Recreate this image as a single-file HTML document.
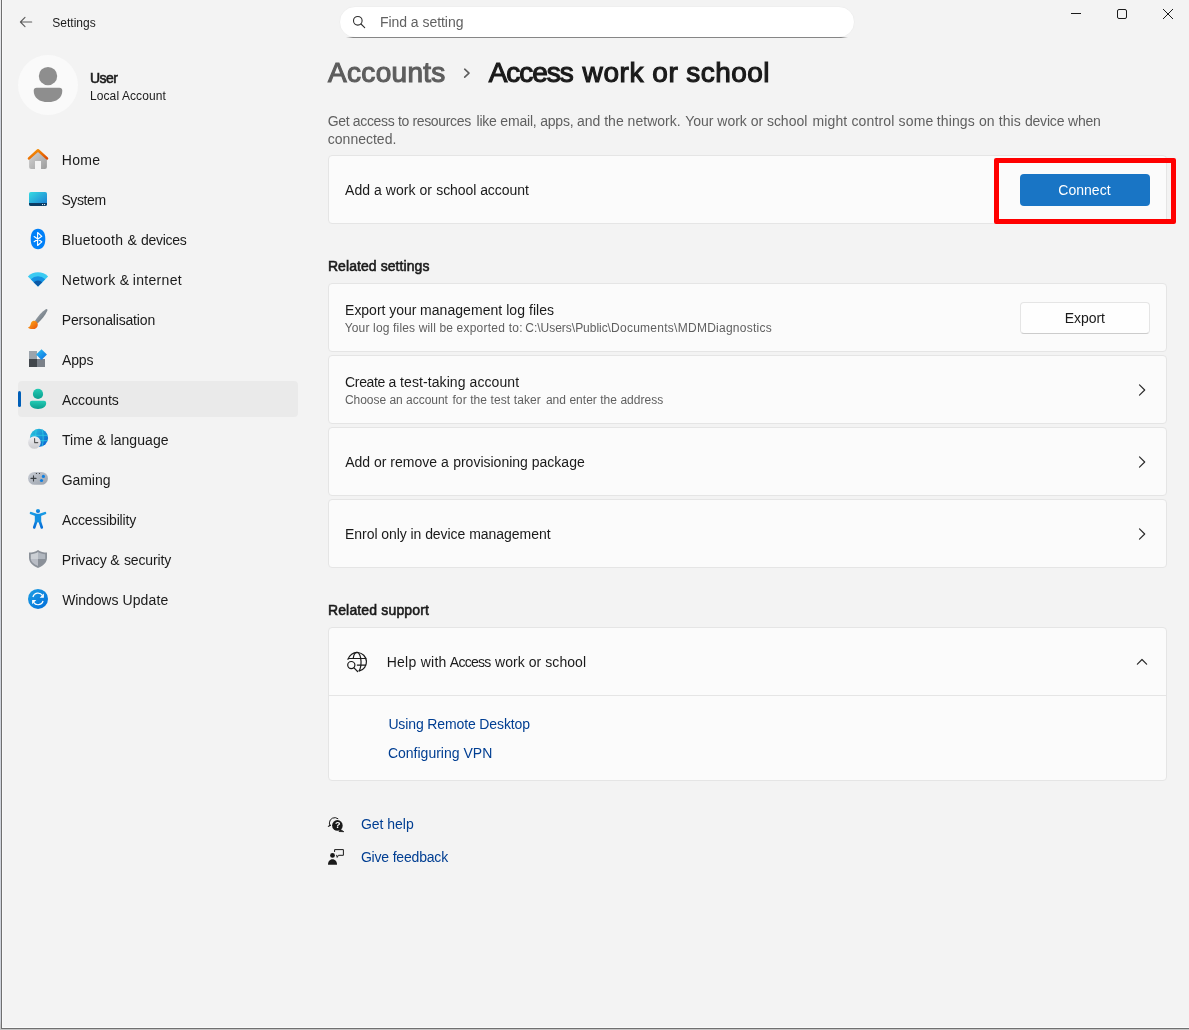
<!DOCTYPE html>
<html lang="en"><head><meta charset="utf-8"><title>Settings</title>
<style>
html,body{margin:0;padding:0;}
body{width:1189px;height:1030px;overflow:hidden;background:#f3f3f3;font-family:"Liberation Sans",sans-serif;}
#win{position:relative;width:1189px;height:1030px;overflow:hidden;background:#f3f3f3;}
.t{position:absolute;white-space:nowrap;line-height:1;}
.abs{position:absolute;}
.card{position:absolute;left:328px;width:839px;box-sizing:border-box;background:#fbfbfb;border:1px solid #e5e5e5;border-radius:4px;}
svg{position:absolute;overflow:visible;}
#txt{position:absolute;left:0;top:0;width:1189px;height:1030px;will-change:transform;}

</style></head><body>
<div id="win">
<!-- window frame edges -->
<div class="abs" style="left:0;top:0;width:1px;height:1030px;background:linear-gradient(to bottom,#ededee 0,#e4e5e9 40px,#cfd3dc 120px,#cdd1da 1020px,#c4c4c4 1026px)"></div>
<div class="abs" style="left:1px;top:0;width:1px;height:1029px;background:#6f6f6f"></div>
<div class="abs" style="left:2px;top:0;width:1px;height:1028px;background:#f9f9f9"></div>
<div class="abs" style="left:2px;top:1027px;width:1187px;height:1px;background:#fafafa"></div>
<div class="abs" style="left:1px;top:1028px;width:1188px;height:1px;background:#707070"></div>
<div class="abs" style="left:0;top:1029px;width:1189px;height:1px;background:#c4c4c4"></div>

<!-- search box -->
<div class="abs" style="left:339px;top:6px;width:516px;height:32px;box-sizing:border-box;background:#fff;border:1px solid #efefef;border-radius:16px"></div>
<div class="abs" style="left:346px;top:37px;width:502px;height:1px;background:linear-gradient(to right,rgba(134,134,134,0),#868686 7px,#868686 495px,rgba(134,134,134,0))"></div>

<!-- avatar -->
<div class="abs" style="left:18px;top:55px;width:60px;height:60px;border-radius:50%;background:#fafafa"></div>

<!-- selected nav -->
<div class="abs" style="left:18px;top:381px;width:280px;height:36px;border-radius:4px;background:#eaeaea"></div>
<div class="abs" style="left:18px;top:391px;width:3px;height:16px;border-radius:1.5px;background:#005fb8"></div>

<!-- cards -->
<div class="card" style="top:155px;height:69px"></div>
<div class="card" style="top:283px;height:69px"></div>
<div class="card" style="top:355px;height:69px"></div>
<div class="card" style="top:427px;height:69px"></div>
<div class="card" style="top:499px;height:69px"></div>
<div class="card" style="top:627px;height:154px"></div>
<div class="abs" style="left:329px;top:695px;width:837px;height:1px;background:#e5e5e5"></div>

<!-- buttons -->
<div class="abs" style="left:1020px;top:174px;width:130px;height:32px;border-radius:4px;background:#1975c5"></div>
<div class="abs" style="left:1020px;top:302px;width:130px;height:32px;box-sizing:border-box;border-radius:4px;background:#fefefe;border:1px solid #e5e5e5;border-bottom-color:#cccccc"></div>

<!-- red highlight -->
<div class="abs" style="left:994px;top:158px;width:182px;height:66px;box-sizing:border-box;border:5px solid #ff0000;border-radius:2px"></div>
<svg width="1189" height="1030" viewBox="0 0 1189 1030" style="left:0;top:0">
<defs>
<linearGradient id="gRoof" x1="0" y1="0" x2="1" y2="1"><stop offset="0" stop-color="#f59a0a"/><stop offset="0.5" stop-color="#ec7404"/><stop offset="1" stop-color="#dc4a00"/></linearGradient>
<linearGradient id="gHouse" x1="0" y1="0" x2="1" y2="1"><stop offset="0" stop-color="#d6d6d6"/><stop offset="1" stop-color="#9c9c9c"/></linearGradient>
<linearGradient id="gSys" x1="0" y1="0" x2="1" y2="1"><stop offset="0" stop-color="#35dbe2"/><stop offset="1" stop-color="#1a78d2"/></linearGradient>
<linearGradient id="gHandle" x1="0" y1="0" x2="1" y2="1"><stop offset="0" stop-color="#aab2ba"/><stop offset="1" stop-color="#5c666e"/></linearGradient>
<linearGradient id="gPaint" x1="0" y1="0" x2="1" y2="1"><stop offset="0" stop-color="#ffb21a"/><stop offset="1" stop-color="#e8500a"/></linearGradient>
<linearGradient id="gDiamond" x1="0" y1="0" x2="1" y2="1"><stop offset="0" stop-color="#2cc4f2"/><stop offset="1" stop-color="#0a6ae0"/></linearGradient>
<linearGradient id="gTeal" x1="0" y1="0" x2="0" y2="1"><stop offset="0" stop-color="#24cbb4"/><stop offset="1" stop-color="#0a9e8e"/></linearGradient>
<linearGradient id="gGlobe" x1="0" y1="0" x2="1" y2="1"><stop offset="0" stop-color="#2ccbdc"/><stop offset="1" stop-color="#0858d0"/></linearGradient>
<linearGradient id="gClock" x1="0" y1="0" x2="0" y2="1"><stop offset="0" stop-color="#f0f0f3"/><stop offset="1" stop-color="#cacace"/></linearGradient>
<linearGradient id="gPad" x1="0" y1="0" x2="1" y2="1"><stop offset="0" stop-color="#c8ccd4"/><stop offset="1" stop-color="#9aa2ac"/></linearGradient>
<linearGradient id="gAcc" x1="0" y1="0" x2="0" y2="1"><stop offset="0" stop-color="#1a9be4"/><stop offset="1" stop-color="#0870d8"/></linearGradient>
<linearGradient id="gUpd" x1="0" y1="0" x2="1" y2="1"><stop offset="0" stop-color="#1fa0e4"/><stop offset="1" stop-color="#006cd8"/></linearGradient>
</defs>

<!-- back arrow -->
<path d="M31.700 22H20.400M25 17.400l-4.600 4.600 4.600 4.600" fill="none" stroke="#5c5c5c" stroke-width="1.1" stroke-linecap="round" stroke-linejoin="round"/>

<!-- window controls -->
<path d="M1071 13.5h10" stroke="#1a1a1a" stroke-width="1" fill="none"/>
<rect x="1117.5" y="9.5" width="9" height="9" rx="1.5" fill="none" stroke="#1a1a1a" stroke-width="1"/>
<path d="M1163 9l10 10M1173 9l-10 10" stroke="#1a1a1a" stroke-width="1" fill="none"/>

<!-- search icon -->
<circle cx="357.8" cy="20.8" r="4.3" fill="none" stroke="#2e2e2e" stroke-width="1.1"/>
<path d="M361 24l3.700 3.600" stroke="#2e2e2e" stroke-width="1.1" stroke-linecap="round"/>

<!-- avatar person -->
<circle cx="48" cy="76.1" r="9.2" fill="#8e8e8e"/>
<path d="M36.7 87.7h22.6a3 3 0 0 1 3 3c0 7-5.6 11.4-14.3 11.4s-14.3-4.4-14.3-11.4a3 3 0 0 1 3-3z" fill="#8e8e8e"/>

<!-- breadcrumb chevron -->
<path d="M464.700 69.200l4.300 4-4.300 4" fill="none" stroke="#5d5d5d" stroke-width="1.600" stroke-linecap="round" stroke-linejoin="round"/>

<!-- HOME -->
<path d="M29.1 158.5L38 150.5l8.9 8v8.4a2 2 0 0 1-2 2H41v-8h-6v8h-3.9a2 2 0 0 1-2-2z" fill="url(#gHouse)"/>
<path d="M29 158.4L38 150.3l9 8.1" fill="none" stroke="url(#gRoof)" stroke-width="2.6" stroke-linecap="round" stroke-linejoin="round"/>

<!-- SYSTEM -->
<rect x="29" y="192" width="18" height="14" rx="1.8" fill="url(#gSys)"/>
<path d="M29 203h18v1.2a1.8 1.8 0 0 1-1.8 1.8H30.8a1.8 1.8 0 0 1-1.8-1.8z" fill="#0b3b63"/>
<rect x="42" y="204" width="1.1" height="1.1" fill="#d8e4ee"/><rect x="44" y="204" width="1.1" height="1.1" fill="#d8e4ee"/>

<!-- BLUETOOTH -->
<path d="M38 228.8c4.6 0 7.3 3.6 7.3 10.2s-2.7 10.2-7.3 10.2-7.3-3.600-7.300-10.200 2.700-10.200 7.300-10.200z" fill="#0080f8"/>
<path d="M34.100 236.500l7.700 5.300-4.200 3.700v-13.000l4.200 3.800-7.700 5.400" fill="none" stroke="#fff" stroke-width="1.1" stroke-linejoin="round" stroke-linecap="round"/>

<!-- NETWORK (wifi) -->
<path d="M38 286.400L27.900 276.500a14.200 14.200 0 0 1 20.200 0z" fill="#3acaf2"/>
<path d="M38 286.400L30.800 279.300a10.200 10.200 0 0 1 14.400 0z" fill="#1591e1"/>
<path d="M38 286.400L33.700 282.200a6.100 6.100 0 0 1 8.600 0z" fill="#0c59a6"/>

<!-- PERSONALISATION -->
<path d="M45.800 309.200c1.300-.5 2 .4 1.500 1.600-2.200 4.800-5.600 9-9.800 12.600l-2.500-2.700c3-4.600 6.600-8.600 10.800-11.500z" fill="url(#gHandle)"/>
<path d="M33.500 320.700c2.300-.3 4.300 1.400 4.300 3.700 0 3-2.500 4.800-5.400 4.700-1.800 0-3.500-.5-4.400-1.500 1.400-.5 2.300-1.400 2.600-3 .3-2 1.200-3.600 2.900-3.900z" fill="url(#gPaint)"/>

<!-- APPS -->
<rect x="29" y="351" width="8" height="8" fill="#9ca4ac"/>
<rect x="29" y="359" width="8" height="8" fill="#41464b"/>
<rect x="37" y="359" width="8" height="8" fill="#7a8088"/>
<path d="M41.500 349.200l5.400 5.400-5.400 5.400-5.400-5.400z" fill="url(#gDiamond)"/>

<!-- ACCOUNTS -->
<circle cx="38" cy="393.900" r="5.100" fill="url(#gTeal)"/>
<path d="M32 400.800h12a2.200 2.200 0 0 1 2.200 2.200c0 3.800-3.200 5.900-8.200 5.900s-8.200-2.100-8.200-5.900a2.200 2.200 0 0 1 2.200-2.200z" fill="url(#gTeal)"/>

<!-- TIME & LANGUAGE -->
<circle cx="39" cy="437.900" r="9.100" fill="url(#gGlobe)"/>
<g fill="none" stroke="#2fd0e6" stroke-width="0.8" opacity="0.9">
<path d="M30.300 435.300h17.400M33 440.700h14.700"/>
<path d="M36.300 429.200c-1 5.500-1 12 0 17.400M42.200 429.400c1.300 5.500 1.300 11.500 0 17"/>
</g>
<circle cx="34.400" cy="442.500" r="6.300" fill="url(#gClock)"/>
<path d="M34.600 438.600v4h3.200" fill="none" stroke="#565656" stroke-width="1.100" stroke-linecap="round" stroke-linejoin="round"/>

<!-- GAMING -->
<rect x="28.100" y="472" width="19.800" height="12.800" rx="6.400" fill="url(#gPad)"/>
<path d="M31 478.400h5M33.500 475.900v5" stroke="#3c4044" stroke-width="1.100" stroke-linecap="round"/>
<circle cx="36.400" cy="473.500" r="0.600" fill="#2a2a2a"/><circle cx="39.500" cy="473.500" r="0.600" fill="#2a2a2a"/>
<circle cx="43.400" cy="476.400" r="1.600" fill="#0f7fe0"/><circle cx="41.500" cy="480.500" r="1.600" fill="#0f7fe0"/>

<!-- ACCESSIBILITY -->
<circle cx="38" cy="511" r="2.100" fill="url(#gAcc)"/>
<path d="M31 513.100l5.300 1.900h3.400l5.300-1.900M36.200 515v6.500l-2 6M39.800 515v6.500l2 6" fill="none" stroke="url(#gAcc)" stroke-width="2.600" stroke-linecap="round" stroke-linejoin="round"/>
<rect x="34.900" y="514" width="6.200" height="8.300" fill="#1391e2"/>

<!-- PRIVACY -->
<path d="M38 549.900c2.600 1.800 5.600 2.600 9 2.700v5c0 4.600-3 8-9 10.400-6-2.400-9-5.800-9-10.400v-5c3.400-.1 6.400-.9 9-2.700z" fill="#8b9199"/>
<path d="M38 551.900c-2.200 1.400-4.600 2.100-7.200 2.300v4.800H38z" fill="#ccd0d5"/>
<path d="M38 551.900c2.200 1.400 4.600 2.100 7.200 2.300v4.800H38z" fill="#b1b7bf"/>
<path d="M30.800 559H38v7c-4.600-2-7-4.200-7.200-7z" fill="#b9bdc5"/>
<path d="M45.200 559H38v7c4.600-2 7-4.200 7.200-7z" fill="#8a9098"/>

<!-- WINDOWS UPDATE -->
<circle cx="38" cy="598.900" r="10" fill="url(#gUpd)"/>
<path d="M32.900 597a5.300 5.300 0 0 1 9.500-1.600" fill="none" stroke="#fff" stroke-width="1.200"/>
<path d="M43.900 593.600v4.200h-4.200z" fill="#fff"/>
<path d="M43.100 600.800a5.300 5.300 0 0 1-9.500 1.600" fill="none" stroke="#fff" stroke-width="1.200"/>
<path d="M32.100 604.200v-4.200h4.200z" fill="#fff"/>

<!-- card chevrons -->
<g fill="none" stroke="#2b2b2b" stroke-width="1.200" stroke-linecap="round" stroke-linejoin="round">
<path d="M1139.500 384.800l5.200 5.200-5.200 5.200"/>
<path d="M1139.500 456.800l5.200 5.200-5.200 5.200"/>
<path d="M1139.500 528.800l5.200 5.200-5.200 5.200"/>
<path d="M1137.400 664.200l4.600-4.700 4.600 4.700"/>
</g>

<!-- help globe icon -->
<g fill="none" stroke="#1a1a1a" stroke-width="1.200" stroke-linecap="round" stroke-linejoin="round">
<path d="M347.970 659.420A9.400 9.400 0 1 1 359.400 670.950"/>
<path d="M348.300 658.500H365.800M357.300 665.100H365.800"/>
<path d="M353.300 657.900c.500-3.300 1.900-5.400 3.750-5.450 2.200 0 4 4.200 4 9.400 0 4.400-.700 7.400-2 9.100"/>
<circle cx="351.300" cy="665.100" r="3.600"/>
<path d="M354 667.800l3.600 3.700"/>
</g>

<!-- get help icon -->
<circle cx="337.400" cy="825.400" r="5.300" fill="#1a1a1a"/>
<path d="M340.500 829.500l3.300 2.200-4.800-.2z" fill="#1a1a1a" stroke="#1a1a1a" stroke-width="0.800" stroke-linejoin="round"/>
<path d="M337.900 818.600a5.400 5.400 0 0 0-8.500 4.300c0 1 .1 1.800.3 2.500" fill="none" stroke="#1a1a1a" stroke-width="1" stroke-linecap="round"/>
<path d="M328.300 826.500l2.500-1.300-1.300 0z" fill="#1a1a1a" stroke="#1a1a1a" stroke-width="1" stroke-linejoin="round"/>

<!-- feedback icon -->
<circle cx="332.500" cy="855.400" r="2.400" fill="#1a1a1a"/>
<path d="M328 864.700c0-3.200 1.800-5.500 4.500-5.500s4.500 2.300 4.500 5.500z" fill="#1a1a1a"/>
<path d="M334.600 851.600v-2h8.800v5.700h-5l-1.200 2.100-.5-2.100" fill="none" stroke="#1a1a1a" stroke-width="1" stroke-linejoin="round" stroke-linecap="round"/>
</svg>

<div id="txt">
<span class="t" style="left:52.18px;top:17.24px;font-size:12px;color:#1b1b1b;letter-spacing:0.030px">Settings</span>
<span class="t" style="left:379.97px;top:15.15px;font-size:14px;color:#616161;letter-spacing:-0.044px">Find a setting</span>
<span class="t" style="left:90.00px;top:71.15px;font-size:14px;color:#1a1a1a;letter-spacing:-0.558px;-webkit-text-stroke:0.56px #1a1a1a">User</span>
<span class="t" style="left:90.00px;top:90.14px;font-size:12px;color:#1a1a1a;letter-spacing:0.092px">Local Account</span>
<span class="t" style="left:61.76px;top:152.95px;font-size:14px;color:#1a1a1a;letter-spacing:0.335px">Home</span>
<span class="t" style="left:61.42px;top:192.95px;font-size:14px;color:#1a1a1a;letter-spacing:-0.382px">System</span>
<span class="t" style="left:61.76px;top:232.95px;font-size:14px;color:#1a1a1a;letter-spacing:0.261px">Bluetooth &amp; </span>
<span class="t" style="left:141.06px;top:232.95px;font-size:14px;color:#1a1a1a;letter-spacing:-0.288px">devices</span>
<span class="t" style="left:61.76px;top:272.95px;font-size:14px;color:#1a1a1a;letter-spacing:0.350px">Network &amp; </span>
<span class="t" style="left:132.69px;top:272.95px;font-size:14px;color:#1a1a1a;letter-spacing:0.338px">internet</span>
<span class="t" style="left:61.76px;top:312.95px;font-size:14px;color:#1a1a1a;letter-spacing:-0.163px">Personalisation</span>
<span class="t" style="left:62.06px;top:352.95px;font-size:14px;color:#1a1a1a;letter-spacing:-0.155px">Apps</span>
<span class="t" style="left:62.06px;top:392.95px;font-size:14px;color:#1a1a1a;letter-spacing:-0.138px">Accounts</span>
<span class="t" style="left:61.97px;top:432.95px;font-size:14px;color:#1a1a1a;letter-spacing:0.099px">Time &amp; </span>
<span class="t" style="left:110.44px;top:432.95px;font-size:14px;color:#1a1a1a;letter-spacing:0.078px">language</span>
<span class="t" style="left:61.68px;top:472.95px;font-size:14px;color:#1a1a1a;letter-spacing:-0.053px">Gaming</span>
<span class="t" style="left:62.06px;top:512.95px;font-size:14px;color:#1a1a1a;letter-spacing:-0.175px">Accessibility</span>
<span class="t" style="left:61.76px;top:552.95px;font-size:14px;color:#1a1a1a;letter-spacing:-0.163px">Privacy &amp; </span>
<span class="t" style="left:123.92px;top:552.95px;font-size:14px;color:#1a1a1a;letter-spacing:-0.138px">security</span>
<span class="t" style="left:62.17px;top:592.95px;font-size:14px;color:#1a1a1a;letter-spacing:-0.095px">Windows </span>
<span class="t" style="left:122.46px;top:592.95px;font-size:14px;color:#1a1a1a;letter-spacing:0.134px">Update</span>
<span class="t" style="left:328.04px;top:59.30px;font-size:28px;color:#5d5d5d;letter-spacing:0.308px;-webkit-text-stroke:1.12px #5d5d5d">Accounts</span>
<span class="t" style="left:488.72px;top:59.30px;font-size:28px;color:#1a1a1a;letter-spacing:-1.065px;-webkit-text-stroke:1.12px #1a1a1a">Access </span>
<span class="t" style="left:582.62px;top:59.30px;font-size:28px;color:#1a1a1a;letter-spacing:0.554px;-webkit-text-stroke:1.12px #1a1a1a">work or </span>
<span class="t" style="left:686.36px;top:59.30px;font-size:28px;color:#1a1a1a;letter-spacing:0.428px;-webkit-text-stroke:1.12px #1a1a1a">school</span>
<span class="t" style="left:327.68px;top:113.75px;font-size:14px;color:#5f5f5f;letter-spacing:-0.337px">Get access to resources </span>
<span class="t" style="left:476.47px;top:113.75px;font-size:14px;color:#5f5f5f;letter-spacing:-0.200px">like email, apps, </span>
<span class="t" style="left:576.90px;top:113.75px;font-size:14px;color:#5f5f5f;letter-spacing:0.016px">and the network. </span>
<span class="t" style="left:685.23px;top:113.75px;font-size:14px;color:#5f5f5f;letter-spacing:-0.021px">Your work or school </span>
<span class="t" style="left:812.42px;top:113.75px;font-size:14px;color:#5f5f5f;letter-spacing:0.152px">might control some </span>
<span class="t" style="left:936.85px;top:113.75px;font-size:14px;color:#5f5f5f;letter-spacing:0.112px">things on this </span>
<span class="t" style="left:1024.92px;top:113.75px;font-size:14px;color:#5f5f5f;letter-spacing:-0.183px">device when</span>
<span class="t" style="left:327.84px;top:131.75px;font-size:14px;color:#5f5f5f;letter-spacing:0.001px">connected.</span>
<span class="t" style="left:345.03px;top:183.35px;font-size:14px;color:#1a1a1a;letter-spacing:0.054px">Add a work or </span>
<span class="t" style="left:436.23px;top:183.35px;font-size:14px;color:#1a1a1a;letter-spacing:-0.063px">school account</span>
<span class="t" style="left:1058.30px;top:183.35px;font-size:14px;color:#ffffff;letter-spacing:0.018px">Connect</span>
<span class="t" style="left:327.91px;top:259.15px;font-size:14px;color:#1a1a1a;letter-spacing:0.075px;-webkit-text-stroke:0.56px #1a1a1a">Related settings</span>
<span class="t" style="left:345.08px;top:302.75px;font-size:14px;color:#1a1a1a;letter-spacing:-0.028px">Export your </span>
<span class="t" style="left:420.00px;top:302.75px;font-size:14px;color:#1a1a1a;letter-spacing:0.053px">management log files</span>
<span class="t" style="left:344.69px;top:321.84px;font-size:12px;color:#5f5f5f;letter-spacing:0.162px">Your log files will be </span>
<span class="t" style="left:456.52px;top:321.84px;font-size:12px;color:#5f5f5f;letter-spacing:0.249px">exported to: </span>
<span class="t" style="left:525.33px;top:321.84px;font-size:12px;color:#5f5f5f;letter-spacing:-0.023px">C:\Users\Public </span>
<span class="t" style="left:607.45px;top:321.84px;font-size:12px;color:#5f5f5f;letter-spacing:0.263px">\Documents\MDMDiagnostics</span>
<span class="t" style="left:1064.76px;top:311.45px;font-size:14px;color:#1a1a1a;letter-spacing:-0.069px">Export</span>
<span class="t" style="left:345.09px;top:374.75px;font-size:14px;color:#1a1a1a;letter-spacing:-0.338px">Create a </span>
<span class="t" style="left:400.12px;top:374.75px;font-size:14px;color:#1a1a1a;letter-spacing:0.083px">test-taking account</span>
<span class="t" style="left:344.92px;top:393.84px;font-size:12px;color:#5f5f5f;letter-spacing:-0.025px">Choose an account </span>
<span class="t" style="left:452.45px;top:393.84px;font-size:12px;color:#5f5f5f;letter-spacing:0.096px">for the test taker </span>
<span class="t" style="left:545.92px;top:393.84px;font-size:12px;color:#5f5f5f;letter-spacing:0.030px">and enter the address</span>
<span class="t" style="left:345.23px;top:454.95px;font-size:14px;color:#1a1a1a;letter-spacing:-0.003px">Add or remove a </span>
<span class="t" style="left:453.17px;top:454.95px;font-size:14px;color:#1a1a1a;letter-spacing:0.001px">provisioning package</span>
<span class="t" style="left:345.08px;top:527.15px;font-size:14px;color:#1a1a1a;letter-spacing:-0.062px">Enrol only in device </span>
<span class="t" style="left:469.21px;top:527.15px;font-size:14px;color:#1a1a1a;letter-spacing:-0.039px">management</span>
<span class="t" style="left:327.91px;top:602.95px;font-size:14px;color:#1a1a1a;letter-spacing:0.157px;-webkit-text-stroke:0.56px #1a1a1a">Related support</span>
<span class="t" style="left:386.64px;top:654.75px;font-size:14px;color:#1a1a1a;letter-spacing:0.271px">Help with </span>
<span class="t" style="left:449.83px;top:654.75px;font-size:14px;color:#1a1a1a;letter-spacing:-0.719px">Access </span>
<span class="t" style="left:494.96px;top:654.75px;font-size:14px;color:#1a1a1a;letter-spacing:0.066px">work or school</span>
<span class="t" style="left:388.38px;top:716.95px;font-size:14px;color:#003e92;letter-spacing:-0.123px">Using Remote Desktop</span>
<span class="t" style="left:387.90px;top:746.15px;font-size:14px;color:#003e92;letter-spacing:0.008px">Configuring VPN</span>
<span class="t" style="left:360.88px;top:817.05px;font-size:14px;color:#003e92;letter-spacing:-0.017px">Get help</span>
<span class="t" style="left:360.88px;top:849.85px;font-size:14px;color:#003e92;letter-spacing:-0.183px">Give feedback</span>
<span class="t" style="left:334.9px;top:821.2px;font-size:9px;font-weight:700;color:#fff">?</span>
</div>
</div>
</body></html>
